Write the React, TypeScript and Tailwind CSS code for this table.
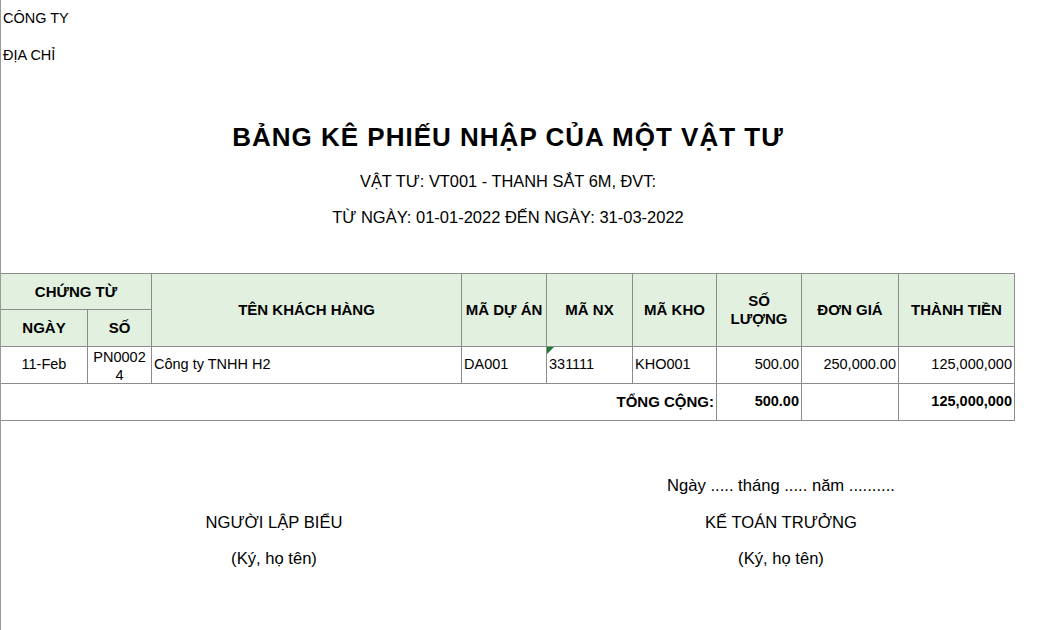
import React from 'react';

const cell = 'border-r border-b border-[#8c8c8c] flex items-center text-[14.5px]';
const head = `${cell} bg-[#e2f0e0] justify-center text-center font-bold text-[15px] leading-[18px]`;
const total = 'font-bold text-[14.5px]';

const App: React.FC = () => {
  return (
    <div className="w-[1039px] h-[630px] bg-white border-l border-[#9a9a9a] text-black font-['Liberation_Sans',Arial,sans-serif] overflow-hidden">
      <div className="h-[37px] flex items-center pl-[2px] text-[14.5px]">CÔNG TY</div>
      <div className="h-[37px] flex items-center pl-[2px] text-[14.5px]">ĐỊA CHỈ</div>

      <div className="w-[1014px]">
        <div className="mt-[36px] h-[54px] flex items-center justify-center font-bold text-[26px] tracking-[1px]">
          BẢNG KÊ PHIẾU NHẬP CỦA MỘT VẬT TƯ
        </div>
        <div className="h-[35px] flex items-center justify-center text-[16.4px]">
          VẬT TƯ: VT001 - THANH SẮT 6M, ĐVT:
        </div>
        <div className="h-[36px] flex items-center justify-center text-[16.5px]">
          TỪ NGÀY: 01-01-2022 ĐẾN NGÀY: 31-03-2022
        </div>
      </div>

      <div className="mt-[38px] w-[1014px] border-t border-[#8c8c8c] grid grid-cols-[87px_64px_310px_85px_86px_84px_85px_97px_116px] grid-rows-[36px_37px_37px_37px]">
        <div className={`${head} col-span-2`}>CHỨNG TỪ</div>
        <div className={`${head} row-span-2`}>TÊN KHÁCH HÀNG</div>
        <div className={`${head} row-span-2`}>MÃ DỰ ÁN</div>
        <div className={`${head} row-span-2`}>MÃ NX</div>
        <div className={`${head} row-span-2`}>MÃ KHO</div>
        <div className={`${head} row-span-2`}>
          SỐ
          <br />
          LƯỢNG
        </div>
        <div className={`${head} row-span-2`}>ĐƠN GIÁ</div>
        <div className={`${head} row-span-2`}>THÀNH TIỀN</div>
        <div className={head}>NGÀY</div>
        <div className={head}>SỐ</div>

        <div className={`${cell} justify-center`}>11-Feb</div>
        <div className={`${cell} justify-center text-center leading-[18px] break-all px-[4px] pt-[1px]`}>PN00024</div>
        <div className={`${cell} pl-[2px]`}>Công ty TNHH H2</div>
        <div className={`${cell} pl-[2px]`}>DA001</div>
        <div className={`${cell} pl-[2px] relative`}>
          <span className="absolute left-0 top-0 w-0 h-0 border-t-[7px] border-r-[7px] border-t-[#1d7a2e] border-r-transparent" />
          331111
        </div>
        <div className={`${cell} pl-[2px]`}>KHO001</div>
        <div className={`${cell} justify-end pr-[2px]`}>500.00</div>
        <div className={`${cell} justify-end pr-[2px]`}>250,000.00</div>
        <div className={`${cell} justify-end pr-[2px]`}>125,000,000</div>

        <div className={`${cell} col-span-6 justify-end pr-[2px] font-bold text-[15px] relative`}>
          <span className="absolute -left-px -top-px bottom-0 w-px bg-[#1d7a3a]" />
          TỔNG CỘNG:
        </div>
        <div className={`${cell} justify-end pr-[2px] ${total}`}>500.00</div>
        <div className={cell} />
        <div className={`${cell} justify-end pr-[2px] ${total}`}>125,000,000</div>
      </div>

      <div className="mt-[47px] w-[1014px] grid grid-cols-[546px_468px] text-[16.6px]">
        <div />
        <div className="h-[37px] flex items-center justify-center">Ngày ..... tháng ..... năm ..........</div>
        <div className="h-[36px] flex items-center justify-center">NGƯỜI LẬP BIỂU</div>
        <div className="h-[36px] flex items-center justify-center">KẾ TOÁN TRƯỞNG</div>
        <div className="h-[36px] flex items-center justify-center">(Ký, họ tên)</div>
        <div className="h-[36px] flex items-center justify-center">(Ký, họ tên)</div>
      </div>
    </div>
  );
};

export default App;
